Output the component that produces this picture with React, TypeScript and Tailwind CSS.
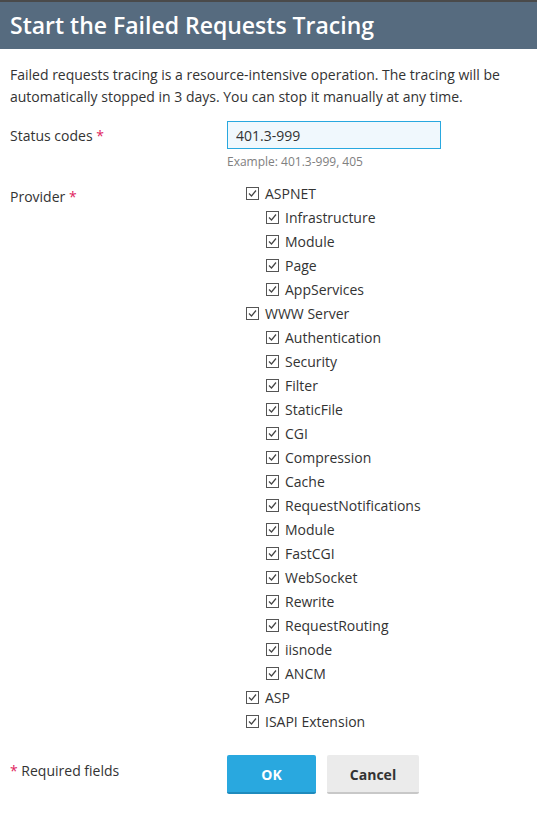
import type { ReactNode } from "react";

type Item = { label: string; children?: string[] };

const providers: Item[] = [
  { label: "ASPNET", children: ["Infrastructure", "Module", "Page", "AppServices"] },
  {
    label: "WWW Server",
    children: [
      "Authentication",
      "Security",
      "Filter",
      "StaticFile",
      "CGI",
      "Compression",
      "Cache",
      "RequestNotifications",
      "Module",
      "FastCGI",
      "WebSocket",
      "Rewrite",
      "RequestRouting",
      "iisnode",
      "ANCM",
    ],
  },
  { label: "ASP" },
  { label: "ISAPI Extension" },
];

function Box() {
  return (
    <svg width="13" height="13" viewBox="0 0 13 13" className="shrink-0">
      <rect x="0.5" y="0.5" width="12" height="12" fill="#fff" stroke="#555" />
      <path d="M3 6.5 L5.5 9 L10 3.5" fill="none" stroke="#444" strokeWidth="1.2" />
    </svg>
  );
}

function Check({ children, nested }: { children: ReactNode; nested?: boolean }) {
  return (
    <label className={`flex h-6 items-center gap-[6px] ${nested ? "pl-[20px]" : ""}`}>
      <Box />
      <span>{children}</span>
    </label>
  );
}

const Req = () => <span className="text-[#e0245e]">*</span>;

export default function App() {
  return (
    <div className="min-h-[814px] bg-white text-[14px] text-[#333] [font-family:'Open_Sans',sans-serif]">
      <div className="h-[2px] bg-[#4a4a4a]" />
      <div className="flex h-[47px] items-center bg-[#566b7f] px-[10px]">
        <h1 className="text-[23px] font-semibold text-white">Start the Failed Requests Tracing</h1>
      </div>

      <div className="px-[10px] pt-[15px]">
        <p className="leading-[22px]">
          Failed requests tracing is a resource-intensive operation. The tracing will be automatically
          stopped in 3 days. You can stop it manually at any time.
        </p>

        <div className="mt-[13px] grid grid-cols-[217px_1fr]">
          <div className="pt-[4px]">
            Status codes <Req />
          </div>
          <div>
            <input
              defaultValue="401.3-999"
              className="h-[28px] w-[214px] border border-[#29a8df] bg-[#f0f8fd] px-[8px] text-[14px] text-[#333] outline-none"
            />
            <div className="mt-[4px] text-[12px] text-[#808080]">Example: 401.3-999, 405</div>
          </div>

          <div className="mt-[15px]">
            Provider <Req />
          </div>
          <div className="mt-[10px] pl-[19px]">
            {providers.map((p) => (
              <div key={p.label}>
                <Check>{p.label}</Check>
                {p.children?.map((c, i) => (
                  <Check key={c + i} nested>
                    {c}
                  </Check>
                ))}
              </div>
            ))}
          </div>

          <div className="mt-[27px]">
            <Req /> Required fields
          </div>
          <div className="mt-[22px] flex gap-[11px]">
            <button className="h-[39px] w-[89px] rounded-[2px] border-b-2 border-[#1f8bbd] bg-[#29a8df] pt-[2px] font-bold text-white">
              OK
            </button>
            <button className="h-[39px] w-[92px] rounded-[2px] border-b-2 border-[#c8c8c8] bg-[#ebebeb] pt-[2px] font-bold text-[#333]">
              Cancel
            </button>
          </div>
        </div>
      </div>
    </div>
  );
}
